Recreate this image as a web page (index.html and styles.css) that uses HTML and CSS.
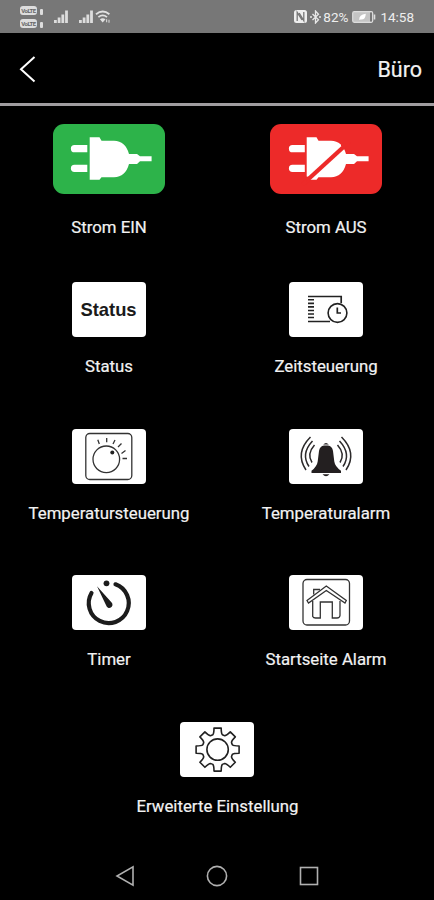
FILE: index.html
```html
<!DOCTYPE html>
<html lang="de">
<head>
    <meta charset="UTF-8">
    <meta name="viewport" content="width=device-width, initial-scale=1.0">
    <title>Büro</title>
    <link rel="stylesheet" href="styles.css">
</head>
<body>
    <div class="status-bar">
        <div class="status-left">
            <div class="volte-group">
                <div class="volte"><span class="volte-tag">VoLTE</span><i></i></div>
                <div class="volte"><span class="volte-tag">VoLTE</span><i></i></div>
            </div>
            <svg class="signal" width="14" height="14" viewBox="0 0 14 14">
                <path d="M0 10h2.8v3H0zM3.7 7.5h2.8V13H3.700zM7.400 4.500h2.800V13H7.400z"/>
                <path d="M11.100 0.500h2.800V13h-2.800z"/>
            </svg>
            <svg class="signal second" width="14" height="14" viewBox="0 0 14 14">
                <path d="M0 10h2.800v3H0zM3.700 7.500h2.800V13H3.700zM7.400 4.500h2.800V13H7.400z"/>
                <path d="M11.100 0.500h2.800V13h-2.800z"/>
            </svg>
            <svg class="wifi" width="17" height="14" viewBox="0 0 17 14">
                <g fill="none" stroke="#e2e2e2" stroke-width="1.8">
                    <path d="M1 4.2q6.7-5.4 13.4 0"/>
                    <path d="M3.4 7.1q4.3-3.4 8.6 0"/>
                </g>
                <path d="M4.9 9.2q2.8-2 5.6 0L7.7 12.6z" fill="#e2e2e2"/>
                <path d="M11.6 9.2v3M14 9.8v3" stroke="#d0d0d0" stroke-width="1.2"/>
            </svg>
        </div>
        <div class="status-right">
            <svg class="nfc" width="13" height="13" viewBox="0 0 13 13">
                <rect width="13" height="13" rx="2.5" fill="#eee"/>
                <path d="M3.2 11V2.3L8 10M5.2 3l4.6 7.7V2" fill="none" stroke="#777" stroke-width="1.3"/>
            </svg>
            <svg class="bluetooth" width="11" height="14" viewBox="0 0 11 14">
                <path d="M2.5 4l6 5.8L5.5 13V1l3 3.2-6 5.8" fill="none" stroke="#e8e8e8" stroke-width="1.3"/>
                <path d="M0 7h2M9 7h2" stroke="#e8e8e8" stroke-width="1.6"/>
            </svg>
            <span class="percent">82%</span>
            <svg class="battery" width="24" height="12" viewBox="0 0 24 12">
                <rect x="0.7" y="0.7" width="20" height="10.6" rx="1.5" fill="#c4c4c4" stroke="#ddd" stroke-width="1.2"/>
                <path d="M18 1.5h2v9h-2z" fill="#777"/>
                <path d="M22.5 3.5v5" stroke="#ddd" stroke-width="1.6"/>
                <path d="M7.2 9q-.3-5.6 6.6-6.3Q13.6 9 8.6 8.5z" fill="#fff"/>
            </svg>
            <span class="clock">14:58</span>
        </div>
    </div>

    <header class="header">
        <svg width="18" height="28" viewBox="0 0 18 28">
            <path d="M15.5 2L2 14.3 15.5 26.5" fill="none" stroke="#fff" stroke-width="2"/>
        </svg>
        <h1>Büro</h1>
    </header>

    <main class="menu">
        <a class="item power">
            <svg class="tile on" width="112" height="70" viewBox="0 0 112 70">
                <path d="M21.5 21H34.3v7.3H21.5a3.65 3.65 0 0 1 0-7.3zM21.5 40.7H34.3V48H21.5a3.65 3.65 0 0 1 0-7.3z"/>
                <path d="M36.7 13.2H46.5L48.5 16.7H61Q72.5 17 76 30H84L87 32.3H98.6v5H87L84 40H76Q72.5 53 61 53.3H48.5L46.5 55.7H36.7z"/>
            </svg>
            <span>Strom EIN</span>
        </a>
        <a class="item power">
            <svg class="tile off" width="112" height="70" viewBox="0 0 112 70">
                <path d="M22.5 21H34.8v7.3H22.5a3.65 3.65 0 0 1 0-7.3zM22.5 40.7H34.8V48H22.5a3.65 3.65 0 0 1 0-7.3z"/>
                <path d="M36.7 13.2H46.5L48.5 16.7H61Q72.5 17 76 30H84L87 32.3H98.6v5H87L84 40H76Q72.5 53 61 53.3H48.5L46.5 55.7H36.7z"/>
                <path d="M32.5 60.5L79.5 17.5" stroke="#ed2a29" stroke-width="4.3"/>
                <path d="M36 52.5L40.5 53 36 57.5zM71 17h8v5h-8z" fill="#ed2a29"/>
            </svg>
            <span>Strom AUS</span>
        </a>

        <a class="item">
            <div class="tile text-tile">Status</div>
            <span>Status</span>
        </a>
        <a class="item">
            <svg class="tile" width="74" height="55" viewBox="0 0 74 55">
                <g fill="none" stroke="#222">
                    <path d="M19 14.5H52.2V21M19 39.5H41" stroke-width="1.7"/>
                    <path d="M22 17v21" stroke-width="6" stroke-dasharray="1.6 1.95"/>
                    <circle cx="48.5" cy="31" r="9.4" stroke-width="1.6"/>
                    <path d="M48.3 25.5V31H52" stroke-width="1.7"/>
                </g>
            </svg>
            <span>Zeitsteuerung</span>
        </a>

        <a class="item">
            <svg class="tile" width="74" height="55" viewBox="0 0 74 55">
                <g fill="none" stroke="#333" stroke-width="1.3">
                    <rect x="13.8" y="4.5" width="46" height="46" rx="4"/>
                    <circle cx="34.3" cy="30.3" r="13.3"/>
                    <path d="M27.3 15L25.8 10.8M34.7 13.2V9M41 15L43 11M46 18L49.5 14.5M49.5 24.5L53.5 21.5M50.5 29.5H55"/>
                </g>
                <circle cx="40.3" cy="23.5" r="2" fill="#222"/>
            </svg>
            <span>Temperatursteuerung</span>
        </a>
        <a class="item">
            <svg class="tile" width="74" height="55" viewBox="0 0 74 55">
                <g fill="#231f20">
                    <path d="M34.2 15.5Q37 12.500 39.8 15.5z"/>
                    <path d="M22.5 44V41.800Q28 37.500 28.700 32.500L30 22Q30.800 17 35 16.500H39Q43.200 17 44 22L45.300 32.500Q46 37.500 52 41.800V44zM33.500 45.200H40.500Q37 49.500 33.500 45.200z"/>
                </g>
                <g fill="none" stroke="#2c2a2b" stroke-width="1.5">
                    <path d="M21.500 8Q5.500 24 17 41M23.500 12Q11.500 25 20 37.500M25.500 16Q17.500 25 23 33.500"/>
                    <path d="M52.500 8Q68.500 24 57 41M50.500 12Q62.500 25 54 37.500M48.500 16Q56.500 25 51 33.500"/>
                </g>
            </svg>
            <span>Temperaturalarm</span>
        </a>

        <a class="item">
            <svg class="tile" width="74" height="55" viewBox="0 0 74 55">
                <path d="M19.5 18A20 20 0 1 0 43.5 9.3" fill="none" stroke="#1c1c1c" stroke-width="4.2" stroke-linecap="round"/>
                <circle cx="34.5" cy="8.3" r="2.9" fill="#1c1c1c"/>
                <path d="M25 11.3L39.6 27.5A3.2 3.2 0 1 1 34.2 30.5z" fill="#1c1c1c"/>
            </svg>
            <span>Timer</span>
        </a>
        <a class="item">
            <svg class="tile" width="74" height="55" viewBox="0 0 74 55">
                <g fill="none" stroke="#333" stroke-width="1.3">
                    <rect x="14" y="4.5" width="46.5" height="45.5" rx="4"/>
                    <path d="M18 25.5L37.3 11 57.3 25.5 56 28 37.3 15.5 19.5 28z"/>
                    <path d="M23.7 26V41.5Q24.5 43 26.5 43H31.3V27H43.3V43H48Q50.7 43 51 40.5V26"/>
                    <path d="M24.7 19.5V14.5H31"/>
                </g>
            </svg>
            <span>Startseite Alarm</span>
        </a>

        <a class="item wide">
            <svg class="tile" width="74" height="55" viewBox="0 0 74 55">
                <g fill="none" stroke="#222" stroke-width="1.6" stroke-linejoin="round" transform="translate(37.6 27.6)">
                    <circle r="10.7"/>
                    <path d="M-4.8-14.8Q-3.6-16-3.6-21.5H3.6Q3.6-16 4.8-14.8Q6-14.2 7.1-13.9Q8.8-13.9 12.7-17.7L17.7-12.7Q13.9-8.8 13.9-7.1Q14.2-6 14.8-4.8Q16-3.6 21.5-3.6V3.6Q16 3.6 14.8 4.8Q14.2 6 13.9 7.1Q13.9 8.8 17.7 12.7L12.7 17.7Q8.8 13.9 7.1 13.9Q6 14.2 4.8 14.8Q3.6 16 3.6 21.5H-3.6Q-3.6 16-4.8 14.8Q-6 14.2-7.1 13.9Q-8.8 13.9-12.7 17.7L-17.7 12.7Q-13.9 8.8-13.9 7.1Q-14.2 6-14.8 4.8Q-16 3.6-21.5 3.6V-3.6Q-16-3.6-14.8-4.8Q-14.2-6-13.9-7.1Q-13.9-8.8-17.7-12.7L-12.7-17.7Q-8.8-13.9-7.1-13.9Q-6-14.2-4.8-14.8z"/>
                </g>
            </svg>
            <span>Erweiterte Einstellung</span>
        </a>
    </main>

    <nav class="nav-bar">
        <svg width="20" height="22" viewBox="0 0 20 22">
            <path d="M18 1.8V20.2L2 11z"/>
        </svg>
        <svg width="22" height="22" viewBox="0 0 22 22">
            <circle cx="11" cy="11" r="9.6"/>
        </svg>
        <svg width="20" height="22" viewBox="0 0 20 22">
            <rect x="1.5" y="2.5" width="17" height="17"/>
        </svg>
    </nav>
</body>
</html>
```
FILE: styles.css
```css
* {
    box-sizing: border-box;
    margin: 0;
    padding: 0;
}

body {
    height: 900px;
    background-color: #000;
    color: #f2f2f2;
    font-family: Roboto, sans-serif;
    display: flex;
    flex-direction: column;
    overflow: hidden;
}

svg {
    display: block;
    flex-shrink: 0;
}

/* Android status bar */
.status-bar {
    height: 33px;
    background-color: #777;
    display: flex;
    justify-content: space-between;
    align-items: center;
    padding: 0 20px;
}

.status-left,
.status-right {
    display: flex;
    align-items: center;
}

.volte-group {
    display: flex;
    flex-direction: column;
    gap: 4px;
    margin-right: 11px;
}

.volte {
    display: flex;
    align-items: flex-end;
    gap: 3px;
}

.volte-tag {
    width: 17px;
    height: 9px;
    border-radius: 3px;
    background-color: #ddd;
    color: #666;
    font-size: 6px;
    font-weight: bold;
    letter-spacing: -0.5px;
    line-height: 9px;
    text-align: center;
}

.volte i {
    width: 3px;
    height: 6px;
    border-radius: 1px;
    background-color: #ddd;
}

.signal {
    fill: #ddd;
}

.second {
    margin-left: 11px;
}

.wifi {
    margin-left: 2px;
}

.bluetooth {
    margin: 0 2px 0 3px;
}

.percent,
.clock {
    font-size: 13.5px;
    line-height: 16px;
    color: #eee;
}

.battery {
    margin: 0 4px;
}

/* title row */
.header {
    height: 73px;
    border-bottom: 3px solid #a09da0;
    display: flex;
    justify-content: space-between;
    align-items: center;
    padding: 1px 12px 0 19px;
}

.header h1 {
    font-size: 21.5px;
    font-weight: normal;
    line-height: 26px;
    padding-top: 3px;
    -webkit-text-stroke: 0.2px #f2f2f2;
}

/* menu tiles */
.menu {
    flex: 1;
    display: grid;
    grid-template-columns: 1fr 1fr;
    grid-template-rows: 158px 147px 146px 147px auto;
    padding-top: 18px;
}

.item {
    display: flex;
    flex-direction: column;
    align-items: center;
    gap: 18px;
    font-size: 16.8px;
    line-height: 22px;
    color: #f2f2f2;
    white-space: nowrap;
}

.item span {
    padding-left: 1px;
    -webkit-text-stroke: 0.2px #f2f2f2;
}

.power {
    gap: 22px;
}

.wide {
    grid-column: 1 / 3;
}

.tile {
    width: 74px;
    height: 55px;
    border-radius: 4px;
    background-color: #fff;
}

.text-tile {
    font-family: "Liberation Sans", Arial, sans-serif;
    font-size: 18.4px;
    font-weight: bold;
    line-height: 56px;
    text-align: center;
    color: #1a1a1a;
}

.power .tile {
    width: 112px;
    height: 70px;
    border-radius: 11px;
    fill: #fff;
}

.power .on {
    background-color: #2db34a;
}

.power .off {
    background-color: #ed2a29;
}

/* system navigation */
.nav-bar {
    height: 48px;
    display: flex;
    justify-content: space-between;
    align-items: center;
    padding: 0 115px;
    fill: none;
    stroke: #b0b0b0;
    stroke-width: 1.6;
}
```
